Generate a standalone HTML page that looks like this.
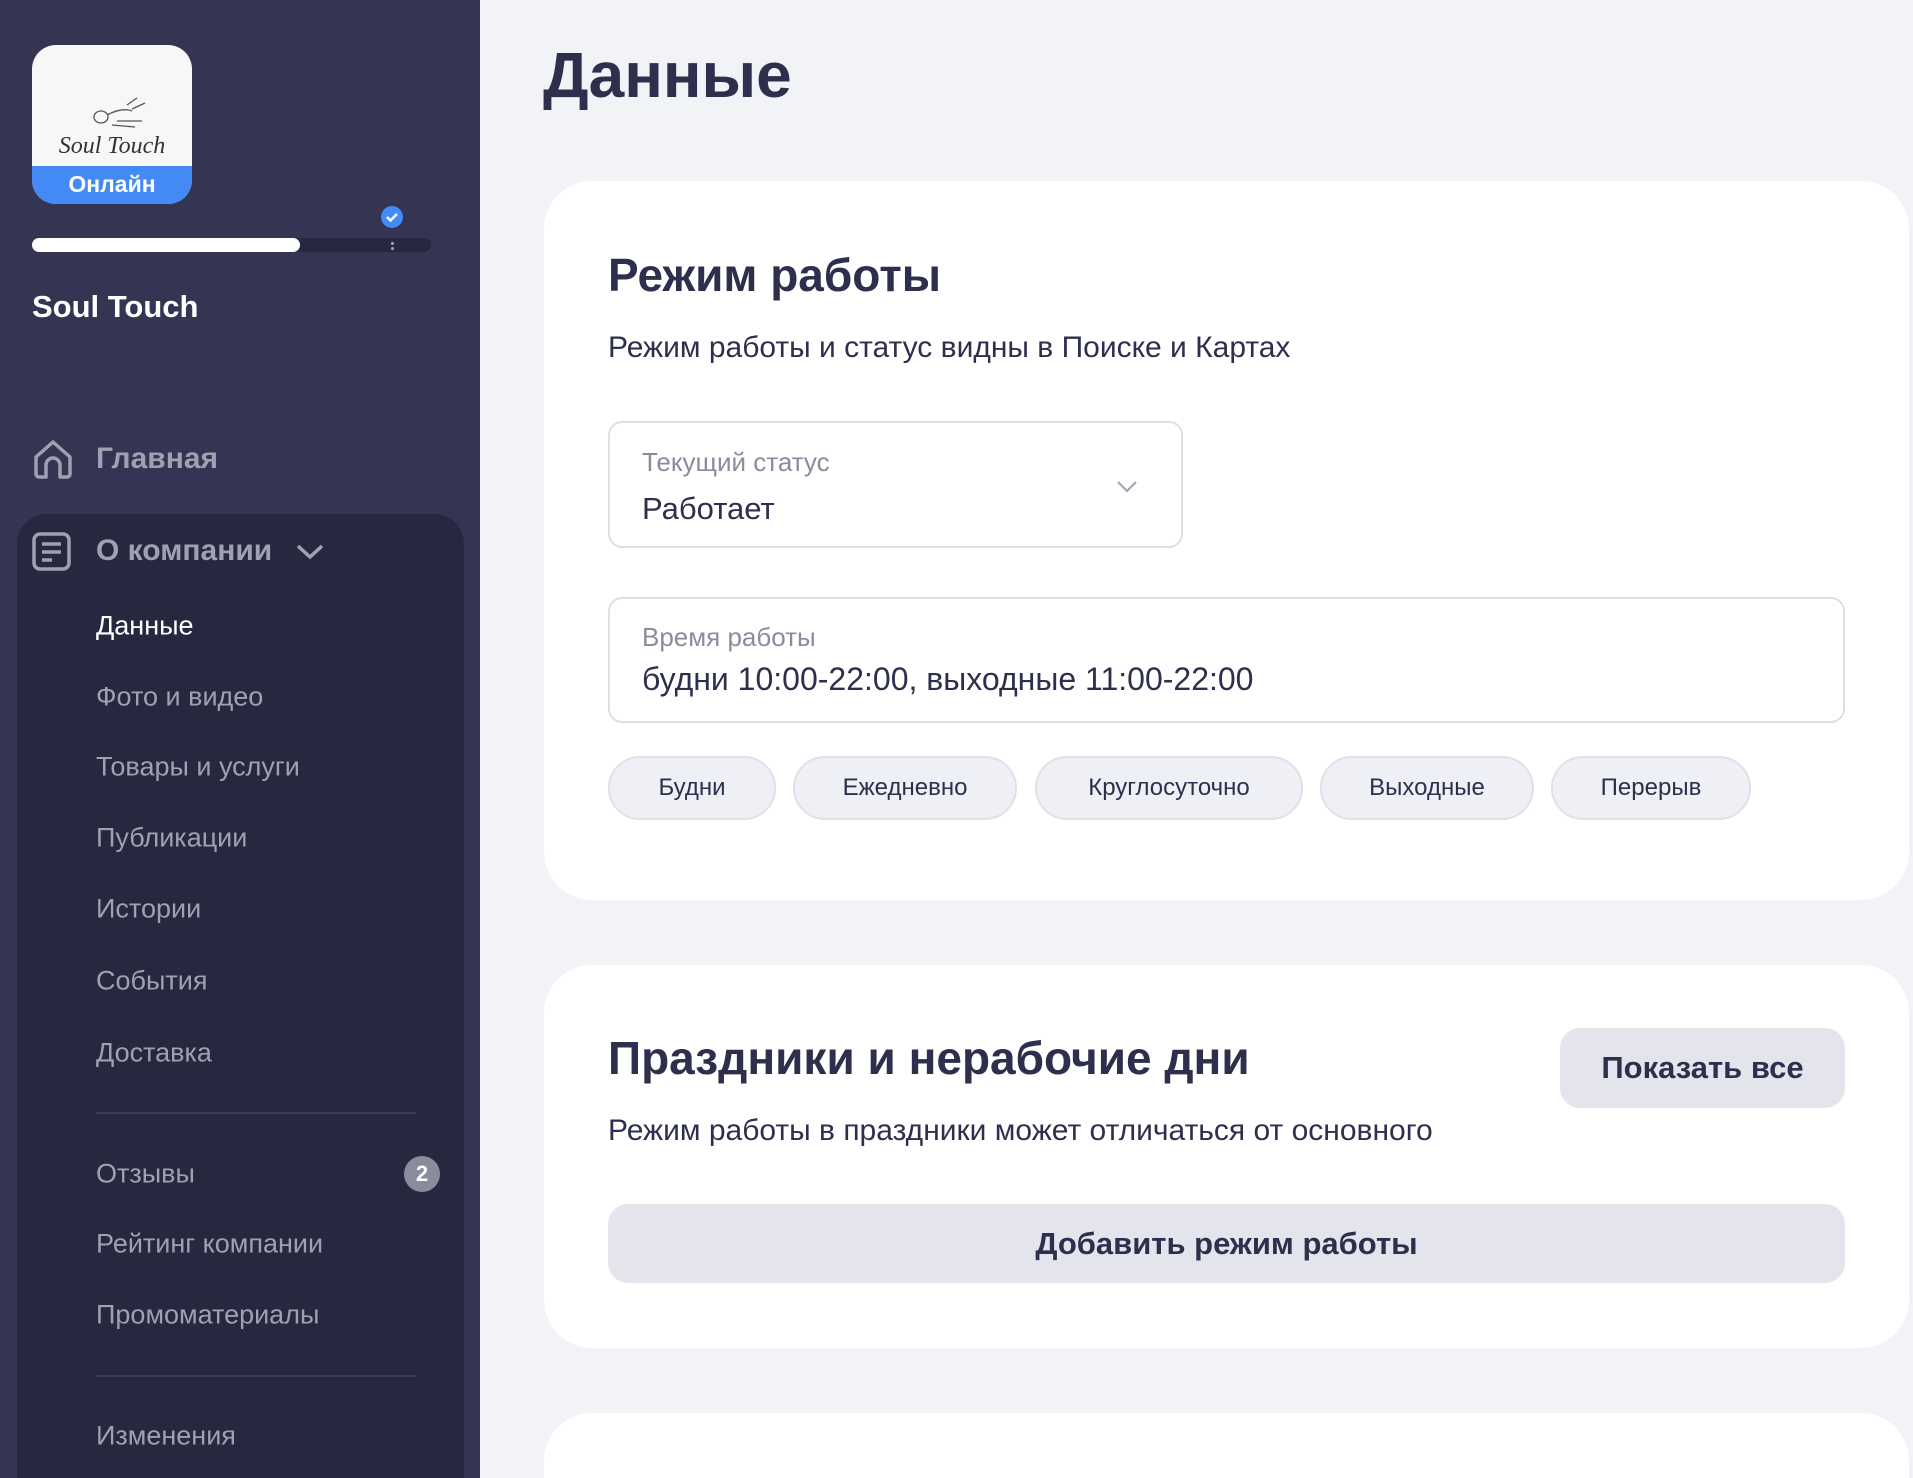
<!DOCTYPE html>
<html style="overflow:hidden;width:1913px;height:1478px"><head><meta charset="utf-8"><style>
*{margin:0;padding:0;box-sizing:border-box}
body{width:1913px;height:1478px;overflow:hidden;background:#f2f3f7;font-family:"Liberation Sans","DejaVu Sans",sans-serif;position:relative;color:#2e2f4d}
.sb{position:absolute;left:0;top:0;width:480px;height:1478px;background:#343453}
.abs{position:absolute;white-space:nowrap}
.logo{left:32px;top:45px;width:160px;height:159px;border-radius:24px;background:#f7f7f7;overflow:hidden}
.logo .bar{position:absolute;left:0;bottom:0;width:100%;height:38px;background:#438af6;color:#fff;font-weight:bold;font-size:23px;text-align:center;line-height:36px}
.panel{left:17px;top:514px;width:447px;height:964px;border-radius:30px 30px 0 0;background:#272840}
.nav{color:#9fa0b0;font-size:27px;transform:translateY(-50%)}
.div{left:96px;width:320px;height:2px;background:#3b3c56}
.card{position:absolute;left:544px;width:1365px;background:#fff;border-radius:48px}
.h2{font-size:46px;font-weight:bold;color:#2e2f4d}
.sub{font-size:30px;color:#2e2f4d}
.box{position:absolute;border:2px solid #dedfe5;border-radius:14px}
.chip{position:absolute;top:756px;height:64px;border:2px solid #dfe0e8;background:#eff0f5;border-radius:32px;font-size:24px;text-align:center;line-height:60px;color:#2e2f4d}
</style></head><body>
<div class="sb"></div>
<div class="abs logo">
<div style="position:absolute;left:0;top:88px;width:160px;text-align:center;font-family:'Liberation Serif',serif;font-style:italic;font-size:24px;color:#333">Soul Touch</div>
<svg style="position:absolute;left:55px;top:50px" width="60" height="40"><g fill="none" stroke="#555" stroke-width="1.3"><ellipse cx="14" cy="22" rx="7" ry="6"/><path d="M20 20 Q35 12 45 16 M30 26 H55 M40 10 L50 3 M45 14 L58 8 M25 30 L48 32"/></g></svg>
<div class="bar">Онлайн</div></div>
<div class="abs" style="left:32px;top:238px;width:399px;height:14px;border-radius:7px;background:#262740"></div>
<div class="abs" style="left:32px;top:238px;width:268px;height:14px;border-radius:7px;background:#fff"></div>
<div class="abs" style="left:391px;top:242px;width:3px;height:3px;border-radius:50%;background:#aaa"></div>
<div class="abs" style="left:391px;top:247px;width:3px;height:3px;border-radius:50%;background:#aaa"></div>
<svg class="abs" style="left:380px;top:205px" width="24" height="24"><circle cx="12" cy="12" r="11" fill="#438af6"/><path d="M7 12 L10.5 15.5 L17 9" stroke="#fff" stroke-width="2.5" fill="none"/></svg>
<div class="abs" style="left:32px;top:289px;font-size:31px;font-weight:bold;color:#fff">Soul Touch</div>
<svg class="abs" style="left:32px;top:438px" width="42" height="42" fill="none" stroke="#9fa0b0" stroke-width="3.5" stroke-linejoin="round"><path d="M4 19 L21 4 L38 19 V36 a3 3 0 0 1 -3 3 H28 V27 a7 7 0 0 0 -14 0 V39 H7 a3 3 0 0 1 -3 -3 Z"/></svg>
<div class="abs nav" style="left:96px;top:459px;font-weight:bold;font-size:30px">Главная</div>
<div class="abs panel"></div>
<svg class="abs" style="left:32px;top:532px" width="40" height="40" fill="none" stroke="#9fa0b0" stroke-width="3.5"><rect x="2" y="2" width="35" height="35" rx="6"/><path d="M10 12 H29 M10 20 H29 M10 28 H20"/></svg>
<div class="abs nav" style="left:96px;top:551px;font-weight:bold;font-size:30px">О компании</div>
<svg class="abs" style="left:296px;top:543px" width="28" height="18" fill="none" stroke="#9fa0b0" stroke-width="3.5"><path d="M2 3 L14 14 L26 3"/></svg>
<div class="abs nav" style="left:96px;top:626px;color:#fff">Данные</div>
<div class="abs nav" style="left:96px;top:697px">Фото и видео</div>
<div class="abs nav" style="left:96px;top:767px">Товары и услуги</div>
<div class="abs nav" style="left:96px;top:838px">Публикации</div>
<div class="abs nav" style="left:96px;top:909px">Истории</div>
<div class="abs nav" style="left:96px;top:981px">События</div>
<div class="abs nav" style="left:96px;top:1053px">Доставка</div>
<div class="abs div" style="top:1112px"></div>
<div class="abs nav" style="left:96px;top:1174px">Отзывы</div>
<div class="abs" style="left:404px;top:1156px;width:36px;height:36px;border-radius:50%;background:#8a8c9e;color:#fff;font-weight:bold;font-size:22px;text-align:center;line-height:36px">2</div>
<div class="abs nav" style="left:96px;top:1244px">Рейтинг компании</div>
<div class="abs nav" style="left:96px;top:1315px">Промоматериалы</div>
<div class="abs div" style="top:1375px"></div>
<div class="abs nav" style="left:96px;top:1436px">Изменения</div>

<div class="abs" style="left:543px;top:38px;font-size:64px;font-weight:bold;color:#2e2f4d">Данные</div>

<div class="card" style="top:181px;height:719px"></div>
<div class="abs h2" style="left:608px;top:248px">Режим работы</div>
<div class="abs sub" style="left:608px;top:331px">Режим работы и статус видны в Поиске и Картах</div>
<div class="box" style="left:608px;top:421px;width:575px;height:127px"></div>
<div class="abs" style="left:642px;top:447px;font-size:26px;color:#8a8b9b">Текущий статус</div>
<div class="abs" style="left:642px;top:491px;font-size:31px">Работает</div>
<svg class="abs" style="left:1116px;top:480px" width="22" height="14" fill="none" stroke="#a5a6b3" stroke-width="2.2"><path d="M2 2 L11 11 L20 2"/></svg>
<div class="box" style="left:608px;top:597px;width:1237px;height:126px"></div>
<div class="abs" style="left:642px;top:622px;font-size:26px;color:#8a8b9b">Время работы</div>
<div class="abs" style="left:642px;top:661px;font-size:32px">будни 10:00-22:00, выходные 11:00-22:00</div>
<div class="chip" style="left:608px;width:168px">Будни</div>
<div class="chip" style="left:793px;width:224px">Ежедневно</div>
<div class="chip" style="left:1035px;width:268px">Круглосуточно</div>
<div class="chip" style="left:1320px;width:214px">Выходные</div>
<div class="chip" style="left:1551px;width:200px">Перерыв</div>

<div class="card" style="top:965px;height:383px"></div>
<div class="abs h2" style="left:608px;top:1031px">Праздники и нерабочие дни</div>
<div class="abs sub" style="left:608px;top:1114px">Режим работы в праздники может отличаться от основного</div>
<div class="abs" style="left:1560px;top:1028px;width:285px;height:80px;border-radius:20px;background:#e4e5ec;font-size:31px;font-weight:bold;text-align:center;line-height:80px">Показать все</div>
<div class="abs" style="left:608px;top:1204px;width:1237px;height:79px;border-radius:20px;background:#e4e5ec;font-size:31px;font-weight:bold;text-align:center;line-height:79px">Добавить режим работы</div>

<div class="card" style="top:1413px;height:65px;border-radius:48px 48px 0 0"></div>
</body></html>
